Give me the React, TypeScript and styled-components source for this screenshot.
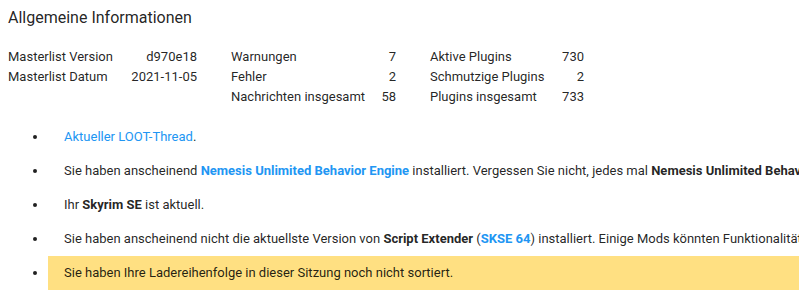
import styled, { createGlobalStyle } from 'styled-components';

const GlobalStyle = createGlobalStyle`
    body {
        margin: 0;
        background: #ffffff;
        font-family: Roboto, "Noto Sans", sans-serif;
        font-size: 13px;
        color: rgba(0, 0, 0, 0.87);
        overflow: hidden;
    }
`;

// the card is wider than the window, so long messages run past the right edge
const Page = styled.div`
    width: 1400px;
    padding: 8px;
    white-space: nowrap;
`;

const Title = styled.h2`
    margin: 0;
    font-size: 16px;
    font-weight: 400;
    line-height: 20px;
`;

const Stats = styled.div`
    display: flex;
    gap: 34px;
    margin-top: 18px;
`;

type StatGroupProps = {
    readonly $width: number
}
const StatGroup = styled.div<StatGroupProps>`
    display: grid;
    grid-template-columns: 1fr auto;
    grid-auto-rows: 20px;
    align-items: center;
    width: ${({ $width }) => $width}px;
`;

const StatValue = styled.span`
    text-align: right;
`;

const Messages = styled.ul`
    margin: 14px 0 0;
    padding-left: 40px;
`;

type MessageProps = {
    readonly $warn?: boolean
}
const Message = styled.li<MessageProps>`
    padding: 8px 16px;
    line-height: 18px;
    background: ${({ $warn }) => $warn ? '#ffe082' : 'transparent'};
`;

const Link = styled.a`
    color: #2196f3;
    text-decoration: none;
`;

const StrongLink = styled(Link)`
    font-weight: 700;
`;

const groups: { width: number, rows: [string, string][] }[] = [
    { width: 189, rows: [['Masterlist Version', 'd970e18'], ['Masterlist Datum', '2021-11-05']] },
    { width: 165, rows: [['Warnungen', '7'], ['Fehler', '2'], ['Nachrichten insgesamt', '58']] },
    { width: 154, rows: [['Aktive Plugins', '730'], ['Schmutzige Plugins', '2'], ['Plugins insgesamt', '733']] },
];

export default function App() {
    return (
        <Page>
            <GlobalStyle />
            <Title>Allgemeine Informationen</Title>
            <Stats>
                {groups.map((g, i) => (
                    <StatGroup key={i} $width={g.width}>
                        {g.rows.map(([label, value]) => [
                            <span key={label}>{label}</span>,
                            <StatValue key={label + '-v'}>{value}</StatValue>,
                        ])}
                    </StatGroup>
                ))}
            </Stats>
            <Messages>
                <Message><Link href='#'>Aktueller LOOT-Thread</Link>.</Message>
                <Message>
                    Sie haben anscheinend <StrongLink href='#'>Nemesis Unlimited Behavior Engine</StrongLink> installiert. Vergessen Sie nicht, jedes mal <b>Nemesis Unlimited Behavior Engine</b> auszuführen, wenn Sie Ihre Ladereihenfolge ändern.
                </Message>
                <Message>Ihr <b>Skyrim SE</b> ist aktuell.</Message>
                <Message>
                    Sie haben anscheinend nicht die aktuellste Version von <b>Script Extender</b> (<StrongLink href='#'>SKSE 64</StrongLink>) installiert. Einige Mods könnten Funktionalität vermissen oder nicht funktionieren.
                </Message>
                <Message $warn>Sie haben Ihre Ladereihenfolge in dieser Sitzung noch nicht sortiert.</Message>
            </Messages>
        </Page>
    );
}
